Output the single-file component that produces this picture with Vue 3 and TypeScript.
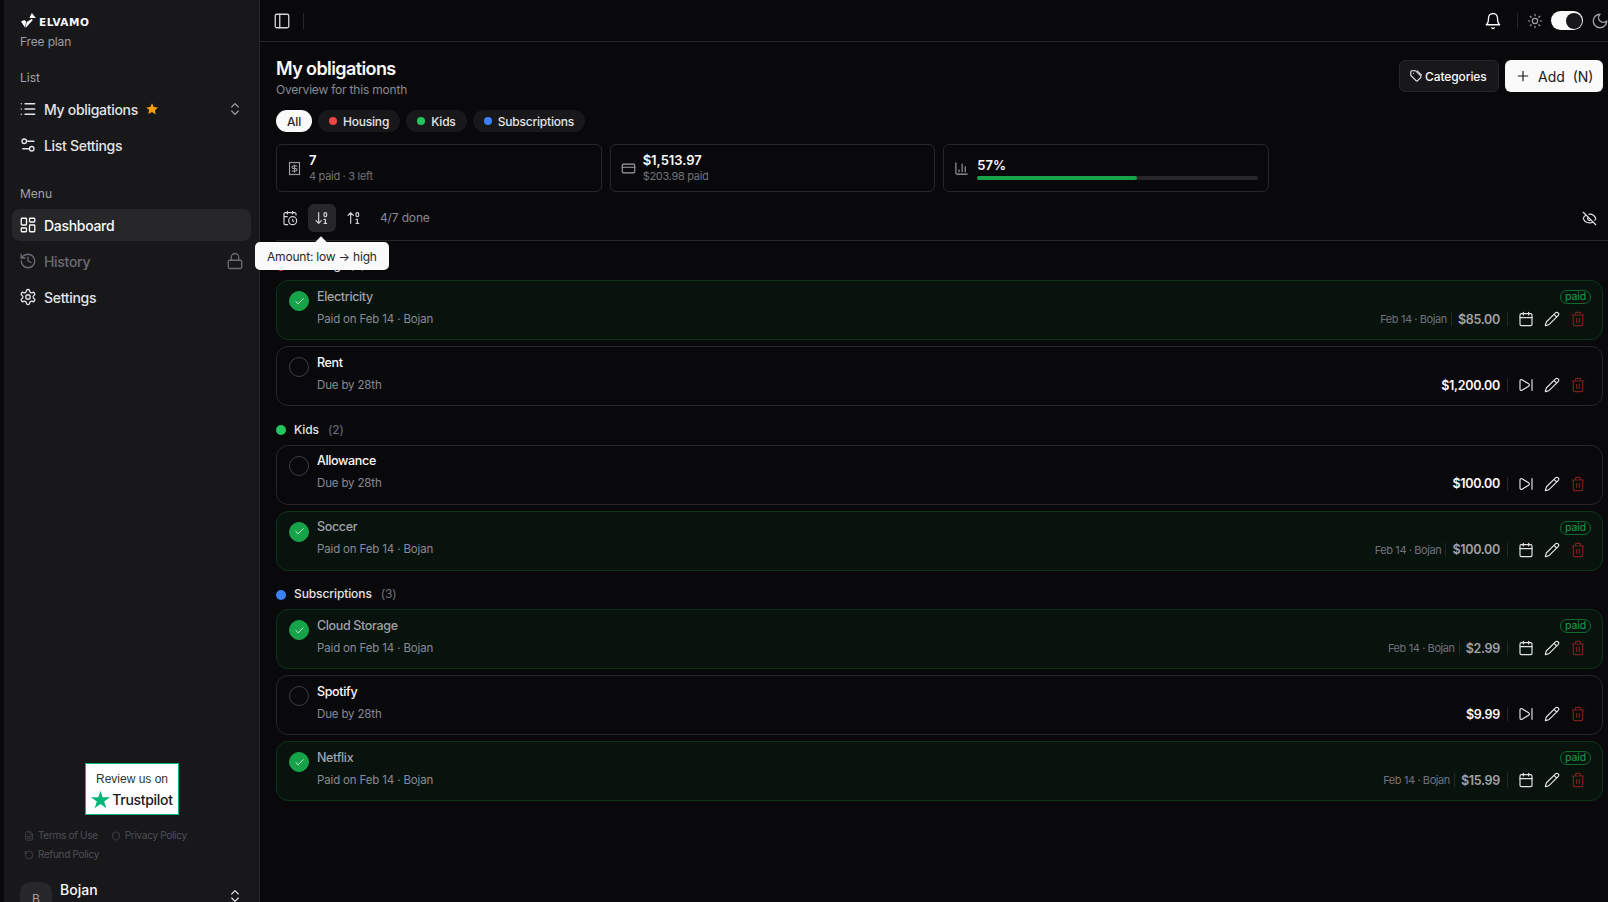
<script setup lang="ts">
import { h } from 'vue'

// lucide-style icon bodies, drawn with stroke=currentColor
const icons: Record<string, string> = {
  list: '<path d="M3 5h.01M3 12h.01M3 19h.01M8 5h13M8 12h13M8 19h13"/>',
  updown: '<path d="m7 15 5 5 5-5M7 9l5-5 5 5"/>',
  sliders: '<path d="M20 7h-9M14 17H5"/><circle cx="17" cy="17" r="3"/><circle cx="7" cy="7" r="3"/>',
  dashboard: '<rect x="3" y="3" width="7" height="9" rx="1"/><rect x="14" y="3" width="7" height="5" rx="1"/><rect x="14" y="12" width="7" height="9" rx="1"/><rect x="3" y="16" width="7" height="5" rx="1"/>',
  history: '<path d="M3 12a9 9 0 1 0 9-9 9.75 9.75 0 0 0-6.74 2.74L3 8"/><path d="M3 3v5h5M12 7v5l4 2"/>',
  lock: '<rect x="3" y="11" width="18" height="11" rx="2"/><path d="M7 11V7a5 5 0 0 1 10 0v4"/>',
  settings: '<path d="M12.22 2h-.44a2 2 0 0 0-2 2v.18a2 2 0 0 1-1 1.73l-.43.25a2 2 0 0 1-2 0l-.15-.08a2 2 0 0 0-2.73.73l-.22.38a2 2 0 0 0 .73 2.73l.15.1a2 2 0 0 1 1 1.72v.51a2 2 0 0 1-1 1.74l-.15.09a2 2 0 0 0-.73 2.73l.22.38a2 2 0 0 0 2.73.73l.15-.08a2 2 0 0 1 2 0l.43.25a2 2 0 0 1 1 1.73V20a2 2 0 0 0 2 2h.44a2 2 0 0 0 2-2v-.18a2 2 0 0 1 1-1.73l.43-.25a2 2 0 0 1 2 0l.15.08a2 2 0 0 0 2.73-.73l.22-.39a2 2 0 0 0-.73-2.73l-.15-.08a2 2 0 0 1-1-1.74v-.5a2 2 0 0 1 1-1.74l.15-.09a2 2 0 0 0 .73-2.73l-.22-.38a2 2 0 0 0-2.73-.73l-.15.08a2 2 0 0 1-2 0l-.43-.25a2 2 0 0 1-1-1.73V4a2 2 0 0 0-2-2z"/><circle cx="12" cy="12" r="3"/>',
  panel: '<rect x="3" y="3" width="18" height="18" rx="2"/><path d="M9 3v18"/>',
  bell: '<path d="M6 8a6 6 0 0 1 12 0c0 7 3 9 3 9H3s3-2 3-9"/><path d="M10.3 21a1.94 1.94 0 0 0 3.4 0"/>',
  sun: '<circle cx="12" cy="12" r="4"/><path d="M12 2v2M12 20v2M4.93 4.93l1.41 1.41M17.66 17.66l1.41 1.41M2 12h2M20 12h2M6.34 17.66l-1.41 1.41M19.07 4.93l-1.41 1.41"/>',
  moon: '<path d="M12 3a6 6 0 0 0 9 9 9 9 0 1 1-9-9Z"/>',
  tags: '<path d="M3 5a2 2 0 0 1 2-2h6l9 9a2 2 0 0 1 0 2.800l-5.200 5.200a2 2 0 0 1-2.800 0L3 11Z"/><path d="M14 3l7.500 7.500"/><path d="M7.500 7.500h.01"/>',
  plus: '<path d="M5 12h14M12 5v14"/>',
  receipt: '<path d="M4 2v20l2-1 2 1 2-1 2 1 2-1 2 1 2-1 2 1V2l-2 1-2-1-2 1-2-1-2 1-2-1-2 1Z"/><path d="M16 8h-6a2 2 0 1 0 0 4h4a2 2 0 1 1 0 4H8M12 17.5v-11"/>',
  card: '<rect x="2" y="5" width="20" height="14" rx="2"/><path d="M2 10h20"/>',
  chart: '<path d="M3 3v16a2 2 0 0 0 2 2h16M18 17V9M13 17V5M8 17v-3"/>',
  calclock: '<path d="M21 7.5V6a2 2 0 0 0-2-2H5a2 2 0 0 0-2 2v14a2 2 0 0 0 2 2h3.5M16 2v4M8 2v4M3 10h5M17.5 17.5 16 16.3V14"/><circle cx="16" cy="16" r="6"/>',
  sortdown: '<path d="m3 16 4 4 4-4M7 20V4"/><rect x="15" y="4" width="4" height="6" ry="2"/><path d="M17 20v-6h-2M15 20h4"/>',
  sortup: '<path d="m3 8 4-4 4 4M7 4v16"/><rect x="15" y="4" width="4" height="6" ry="2"/><path d="M17 20v-6h-2M15 20h4"/>',
  eyeoff: '<path d="M10.733 5.076a10.744 10.744 0 0 1 11.205 6.575 1 1 0 0 1 0 .696 10.747 10.747 0 0 1-1.444 2.49M14.084 14.158a3 3 0 0 1-4.242-4.242M17.479 17.499a10.75 10.75 0 0 1-15.417-5.151 1 1 0 0 1 0-.696 10.75 10.75 0 0 1 4.446-5.143M2 2l20 20"/>',
  calendar: '<path d="M8 2v4M16 2v4"/><rect x="3" y="4" width="18" height="18" rx="2"/><path d="M3 10h18"/>',
  pencil: '<path d="M21.174 6.812a1 1 0 0 0-3.986-3.987L3.842 16.174a2 2 0 0 0-.5.83l-1.321 4.352a.5.5 0 0 0 .623.622l4.353-1.32a2 2 0 0 0 .83-.497zM15 5l4 4"/>',
  trash: '<path d="M3 6h18M19 6v14c0 1-1 2-2 2H7c-1 0-2-1-2-2V6M8 6V4c0-1 1-2 2-2h4c1 0 2 1 2 2v2M10 11v6M14 11v6"/>',
  skip: '<path d="M21 4v16M6.029 4.285A2 2 0 0 0 3 6v12a2 2 0 0 0 3.029 1.715l9.997-5.998a2 2 0 0 0 .003-3.432z"/>',
  file: '<path d="M15 2H6a2 2 0 0 0-2 2v16a2 2 0 0 0 2 2h12a2 2 0 0 0 2-2V7Z"/><path d="M14 2v4a2 2 0 0 0 2 2h4M16 13H8M16 17H8"/>',
  shield: '<path d="M20 13c0 5-3.5 7.5-7.66 8.95a1 1 0 0 1-.67-.01C7.5 20.5 4 18 4 13V6a1 1 0 0 1 1-1c2 0 4.5-1.2 6.24-2.72a1.17 1.17 0 0 1 1.52 0C14.51 3.81 17 5 19 5a1 1 0 0 1 1 1z"/>',
  rotate: '<path d="M3 12a9 9 0 1 0 9-9 9.75 9.75 0 0 0-6.74 2.74L3 8"/><path d="M3 3v5h5"/>',
  check: '<path d="M20 6 9 17l-5-5"/>',
}

const Ico = (props: { name: string; size?: number }) =>
  h('svg', {
    width: props.size ?? 16,
    height: props.size ?? 16,
    viewBox: '0 0 24 24',
    fill: 'none',
    stroke: 'currentColor',
    'stroke-width': 1.75,
    'stroke-linecap': 'round',
    'stroke-linejoin': 'round',
    innerHTML: icons[props.name],
  })
Ico.props = ['name', 'size']

interface Item {
  name: string
  amount: string
  paid: boolean
}

interface Group {
  label: string
  color: string
  items: Item[]
}

const groups: Group[] = [
  {
    label: 'Housing',
    color: '#ef4444',
    items: [
      { name: 'Electricity', amount: '$85.00', paid: true },
      { name: 'Rent', amount: '$1,200.00', paid: false },
    ],
  },
  {
    label: 'Kids',
    color: '#22c55e',
    items: [
      { name: 'Allowance', amount: '$100.00', paid: false },
      { name: 'Soccer', amount: '$100.00', paid: true },
    ],
  },
  {
    label: 'Subscriptions',
    color: '#3b82f6',
    items: [
      { name: 'Cloud Storage', amount: '$2.99', paid: true },
      { name: 'Spotify', amount: '$9.99', paid: false },
      { name: 'Netflix', amount: '$15.99', paid: true },
    ],
  },
]

const progress = 57
</script>

<template>
  <div class="shell">
    <aside class="sidebar">
      <div class="brand">
        <div class="logo">
          <svg width="16" height="15" viewBox="0 0 16 15">
            <path d="M0 8.500 3.200 7l2 1.600L4 14.500z" fill="#fff" />
            <path d="M5.800 9 11 5.800l.6 1.400L5 14.500l-.6-.4z" fill="#fff" />
            <path d="M10.800 0 14.800 5H8.400z" fill="#fff" />
          </svg>
          <span class="logo-text">ELVAMO</span>
        </div>
        <div class="plan">Free plan</div>
      </div>

      <div class="nav-title">List</div>
      <nav class="nav">
        <div class="nav-item">
          <Ico name="list" :size="18" />
          <span>My obligations</span>
          <svg class="star" width="14" height="14" viewBox="0 0 24 24" fill="#f59e0b">
            <path d="M12 2l3.100 6.600 7.100.9-5.200 4.900 1.300 7.100L12 17.100l-6.300 3.400L7 13.400 1.800 9.500l7.100-.9z" />
          </svg>
          <Ico class="nav-end" name="updown" />
        </div>
        <div class="nav-item">
          <Ico name="sliders" :size="18" />
          <span>List Settings</span>
        </div>
      </nav>

      <div class="nav-title menu-title">Menu</div>
      <nav class="nav">
        <div class="nav-item active">
          <Ico name="dashboard" :size="18" />
          <span>Dashboard</span>
        </div>
        <div class="nav-item locked">
          <Ico name="history" :size="18" />
          <span>History</span>
          <Ico class="nav-end" name="lock" :size="18" />
        </div>
        <div class="nav-item">
          <Ico name="settings" :size="18" />
          <span>Settings</span>
        </div>
      </nav>

      <div class="side-foot">
        <div class="trust">
          <div class="trust-top">Review us on</div>
          <div class="trust-brand">
            <svg width="19" height="19" viewBox="0 0 24 24" fill="#00b67a">
              <path d="M12 1l2.800 8.300H24l-7.400 5.300 2.800 8.400L12 17.800 4.600 23l2.800-8.400L0 9.300h9.200z" />
            </svg>
            <span>Trustpilot</span>
          </div>
        </div>
        <div class="legal">
          <span class="legal-link"><Ico name="file" :size="10" />Terms of Use</span>
          <span class="legal-link"><Ico name="shield" :size="10" />Privacy Policy</span>
          <span class="legal-link"><Ico name="rotate" :size="10" />Refund Policy</span>
        </div>
        <div class="user">
          <div class="avatar">B</div>
          <div class="user-name">Bojan</div>
          <Ico class="nav-end" name="updown" />
        </div>
      </div>
    </aside>

    <main class="main">
      <header class="topbar">
        <Ico class="top-icon" name="panel" :size="18" />
        <span class="top-sep"></span>
        <div class="top-right">
          <Ico class="bell" name="bell" :size="18" />
          <span class="top-sep"></span>
          <Ico class="sun" name="sun" />
          <span class="toggle"><i></i></span>
          <Ico class="sun" name="moon" :size="18" />
        </div>
      </header>

      <div class="page">
        <div class="head">
          <div>
            <h1>My obligations</h1>
            <p>Overview for this month</p>
          </div>
          <div class="head-actions">
            <button class="btn-dark"><Ico name="tags" :size="14" />Categories</button>
            <button class="btn-light"><Ico name="plus" />Add&nbsp;&nbsp;(N)</button>
          </div>
        </div>

        <div class="filters">
          <span class="pill on">All</span>
          <span v-for="g in groups" :key="g.label" class="pill">
            <i class="dot" :style="{ background: g.color }"></i>{{ g.label }}
          </span>
        </div>

        <div class="stats">
          <div class="stat">
            <Ico class="stat-icon" name="receipt" :size="15" />
            <div>
              <div class="stat-value">7</div>
              <div class="stat-sub">4 paid · 3 left</div>
            </div>
          </div>
          <div class="stat">
            <Ico class="stat-icon" name="card" :size="15" />
            <div>
              <div class="stat-value">$1,513.97</div>
              <div class="stat-sub">$203.98 paid</div>
            </div>
          </div>
          <div class="stat">
            <Ico class="stat-icon" name="chart" :size="15" />
            <div class="stat-grow">
              <div class="stat-value">{{ progress }}%</div>
              <div class="bar"><div class="bar-fill" :style="{ width: progress + '%' }"></div></div>
            </div>
          </div>
        </div>

        <div class="toolbar">
          <button class="tool"><Ico name="calclock" /></button>
          <button class="tool active">
            <Ico name="sortdown" />
            <span class="tooltip">Amount: low → high</span>
          </button>
          <button class="tool"><Ico name="sortup" /></button>
          <span class="done">4/7 done</span>
          <Ico class="eye" name="eyeoff" :size="15" />
        </div>

        <section v-for="g in groups" :key="g.label" class="group">
          <div class="group-head">
            <i class="group-dot" :style="{ background: g.color }"></i>
            <span class="group-label">{{ g.label }}</span>
            <span class="group-count">({{ g.items.length }})</span>
          </div>
          <div
            v-for="item in g.items"
            :key="item.name"
            class="row"
            :class="{ paid: item.paid }"
          >
            <span class="tick"><Ico v-if="item.paid" name="check" :size="11" /></span>
            <div class="row-text">
              <div class="row-name">{{ item.name }}</div>
              <div class="row-sub">{{ item.paid ? 'Paid on Feb 14 · Bojan' : 'Due by 28th' }}</div>
            </div>
            <div class="row-right">
              <span v-if="item.paid" class="badge">paid</span>
              <div class="row-meta">
                <template v-if="item.paid">
                  <span class="meta-date">Feb 14 · Bojan</span>
                  <span class="meta-sep first"></span>
                </template>
                <span class="amount">{{ item.amount }}</span>
                <span class="meta-sep"></span>
                <span class="act"><Ico :name="item.paid ? 'calendar' : 'skip'" /></span>
                <span class="act"><Ico name="pencil" /></span>
                <span class="act del"><Ico name="trash" /></span>
              </div>
            </div>
          </div>
        </section>
      </div>
    </main>
  </div>
</template>

<style>
html,
body {
  margin: 0;
  background: #09090b;
  overflow: hidden;
}
</style>

<style scoped>
.shell {
  display: flex;
  height: 902px;
  overflow: hidden;
  background: #09090b;
  color: #fafafa;
  font-family: Inter, "Noto Sans", sans-serif;
  font-size: 14px;
}

/* sidebar */
.sidebar {
  flex: none;
  box-sizing: border-box;
  width: 256px;
  height: 930px;
  margin-left: 4px;
  padding: 0 8px;
  display: flex;
  flex-direction: column;
  background: #18181b;
  border-right: 1px solid #27272a;
}

.brand {
  padding: 12px 8px 0 9px;
}

.logo {
  display: flex;
  align-items: center;
  gap: 2px;
  height: 16px;
}

.logo-text {
  font-family: "DejaVu Sans", sans-serif;
  font-size: 10.5px;
  font-weight: 700;
  letter-spacing: 0.5px;
  line-height: 1;
  margin-top: 5px;
}

.plan {
  margin: 5px 0 0 -1px;
  font-size: 12px;
  letter-spacing: -0.15px;
  line-height: 18px;
  color: #9b9ba5;
}

.nav-title {
  margin-top: 17px;
  padding: 0 8px;
  font-size: 12px;
  line-height: 20px;
  color: #a1a1aa;
}

.menu-title {
  margin-top: 23px;
}

.nav {
  display: flex;
  flex-direction: column;
  gap: 4px;
  margin-top: 5px;
}

.nav-item {
  display: flex;
  align-items: center;
  gap: 7px;
  height: 32px;
  padding: 0 8px 0 7px;
  border-radius: 8px;
  font-size: 14px;
  font-weight: 500;
  letter-spacing: -0.3px;
  color: #e4e4e7;
}

.nav-item.active {
  background: #27272a;
  color: #fafafa;
}

.nav-item.locked {
  color: #6b6b73;
}

.nav-end {
  margin-left: auto;
  color: #a1a1aa;
}

.nav-item.locked .nav-end {
  margin-right: -1px;
  color: #6b6b73;
}

.star {
  margin-left: 0;
}

.side-foot {
  margin-top: auto;
}

.trust {
  box-sizing: border-box;
  width: 94px;
  height: 52px;
  margin: 0 auto 0 73px;
  padding-top: 9px;
  background: #fff;
  border: 1.5px solid #00b67a;
  color: #191919;
  font-family: "Liberation Sans", Arial, sans-serif;
  text-align: center;
}

.trust-top {
  font-size: 12px;
  line-height: 15px;
  margin-top: -1px;
  color: #333;
}

.trust-brand {
  display: flex;
  align-items: center;
  justify-content: center;
  gap: 2px;
  margin-top: 3px;
  font-family: Inter, sans-serif;
  font-size: 14px;
  font-weight: 500;
  letter-spacing: -0.3px;
  line-height: 19px;
}

.legal {
  display: flex;
  flex-wrap: wrap;
  gap: 0 13px;
  width: 190px;
  margin: 11px 0 0 12px;
  font-size: 10px;
  letter-spacing: -0.3px;
  line-height: 19px;
  color: #4f4f57;
}

.legal-link {
  display: inline-flex;
  align-items: center;
  gap: 4px;
}

.user {
  display: flex;
  align-items: flex-start;
  gap: 8px;
  margin-top: 18px;
  padding: 0 8px;
  height: 48px;
}

.avatar {
  flex: none;
  width: 32px;
  height: 32px;
  display: flex;
  align-items: center;
  justify-content: center;
  border-radius: 10px;
  background: #27272a;
  color: #a1a1aa;
  font-size: 12px;
}

.user-name {
  font-size: 14px;
  font-weight: 500;
  line-height: 16px;
}

.user .nav-end {
  margin-top: 6px;
  color: #e4e4e7;
}

/* main */
.main {
  flex: 1;
  min-width: 0;
}

.topbar {
  display: flex;
  align-items: center;
  gap: 12px;
  box-sizing: border-box;
  height: 42px;
  padding-left: 13px;
  border-bottom: 1px solid #27272a;
}

.top-icon {
  color: #d4d4d8;
}

.top-sep {
  width: 1px;
  height: 16px;
  background: #27272a;
}

.top-right {
  margin-left: auto;
  display: flex;
  align-items: center;
  gap: 8px;
  margin-right: -1px;
}

.bell {
  color: #fafafa;
  margin-right: 7px;
}

.sun {
  color: #a1a1aa;
}

.top-right .top-sep {
  margin-right: 1px;
}

.toggle {
  display: flex;
  justify-content: flex-end;
  align-items: center;
  box-sizing: border-box;
  width: 32px;
  height: 19px;
  padding: 1.5px;
  border-radius: 10px;
  background: #fafafa;
}

.toggle i {
  width: 16px;
  height: 16px;
  border-radius: 50%;
  background: #18181b;
}

.page {
  padding: 0 5px 0 16px;
}

.head {
  display: flex;
  justify-content: space-between;
  padding-top: 15px;
}

h1 {
  margin: 0;
  font-size: 18px;
  font-weight: 600;
  letter-spacing: -0.6px;
  line-height: 24px;
}

.head p {
  margin: 0;
  font-size: 12px;
  letter-spacing: -0.2px;
  line-height: 18px;
  color: #8a8a94;
}

.head-actions {
  display: flex;
  gap: 6px;
  margin-top: 3px;
}

button {
  font-family: inherit;
}

.btn-dark,
.btn-light {
  display: flex;
  align-items: center;
  box-sizing: border-box;
  height: 32px;
  border-radius: 6px;
  font-weight: 500;
}

.btn-dark {
  gap: 2px;
  width: 100px;
  padding: 0 0 0 9px;
  background: #18181b;
  border: 1px solid #27272a;
  color: #fafafa;
  font-size: 12px;
  letter-spacing: -0.1px;
}

.btn-light {
  gap: 7px;
  width: 98px;
  padding: 0 0 0 10px;
  background: #fafafa;
  border: 0;
  color: #18181b;
  font-size: 14px;
  font-weight: 400;
}

.filters {
  display: flex;
  gap: 6px;
  margin-top: 11px;
}

.pill {
  display: flex;
  align-items: center;
  gap: 6px;
  height: 22px;
  padding: 0 11px;
  border-radius: 11px;
  background: #18181b;
  color: #e4e4e7;
  font-size: 12px;
  font-weight: 500;
  letter-spacing: -0.2px;
}

.pill.on {
  background: #fafafa;
  color: #27272a;
}

.dot {
  width: 8px;
  height: 8px;
  border-radius: 50%;
}

.stats {
  display: grid;
  grid-template-columns: repeat(3, 1fr);
  gap: 8px;
  max-width: 993px;
  margin-top: 12px;
}

.stat {
  display: flex;
  align-items: center;
  gap: 7px;
  box-sizing: border-box;
  height: 48px;
  padding: 0 10px;
  border: 1px solid #27272a;
  border-radius: 6px;
}

.stat-icon {
  flex: none;
  color: #a1a1aa;
}

.stat-grow {
  flex: 1;
  margin-left: 1px;
}

.stat-value {
  font-size: 13px;
  font-weight: 600;
  line-height: 17px;
}

.stat-sub {
  font-size: 11px;
  letter-spacing: -0.3px;
  line-height: 15px;
  color: #71717a;
}

.bar {
  height: 4px;
  margin-top: 2px;
  border-radius: 2px;
  background: #27272a;
}

.bar-fill {
  height: 100%;
  border-radius: 2px;
  background: #16a34a;
}

.toolbar {
  display: flex;
  align-items: center;
  gap: 4px;
  box-sizing: border-box;
  height: 37px;
  margin: 12px -5px 0 0;
  padding: 0 4px 8px 0;
  border-bottom: 1px solid #27272a;
}

.tool {
  position: relative;
  display: flex;
  align-items: center;
  justify-content: center;
  width: 28px;
  height: 28px;
  padding: 0;
  background: none;
  border: 0;
  border-radius: 6px;
  color: #d4d4d8;
}

.tool.active {
  background: #27272a;
}

.tooltip {
  position: absolute;
  left: -53px;
  top: 38px;
  padding: 0 12px;
  height: 28px;
  display: flex;
  align-items: center;
  white-space: nowrap;
  border-radius: 5px;
  background: #fafafa;
  color: #27272a;
  font-size: 12px;
  font-weight: 400;
  letter-spacing: -0.2px;
  z-index: 2;
}

.tooltip::before {
  content: "";
  position: absolute;
  left: 62px;
  top: -4px;
  width: 8px;
  height: 8px;
  background: #fafafa;
  transform: rotate(45deg);
}

.done {
  margin: 0 0 1px 8px;
  font-size: 12px;
  letter-spacing: -0.15px;
  color: #8a8a94;
}

.eye {
  margin-left: auto;
  margin-right: 7px;
  color: #e4e4e7;
}

.group-head {
  display: flex;
  align-items: center;
  height: 16.5px;
  margin: 16px 0 6px;
  font-size: 12px;
  font-weight: 500;
  letter-spacing: -0.1px;
  line-height: 14px;
}

.group-dot {
  width: 10px;
  height: 10px;
  border-radius: 50%;
  margin-right: 8px;
}

.group-label {
  color: #e4e4e7;
  margin-bottom: 1px;
}

.group-count {
  margin: 0 0 1px 9px;
  color: #71717a;
  font-weight: 400;
}

.group:first-of-type .group-head {
  margin-top: 16.5px;
}

.row {
  display: flex;
  box-sizing: border-box;
  height: 60px;
  margin-bottom: 6px;
  padding: 0 11px 0 12px;
  border: 1px solid #27272a;
  border-radius: 12px;
}

.row.paid {
  background: #09130e;
  border-color: #0d3319;
}

.tick {
  flex: none;
  display: flex;
  align-items: center;
  justify-content: center;
  box-sizing: border-box;
  width: 20px;
  height: 20px;
  margin-top: 10px;
  border: 1px solid #3f3f46;
  border-radius: 50%;
  color: #fff;
}

.paid .tick {
  background: #16a34a;
  border-color: #16a34a;
}

.row-text {
  margin-left: 8px;
  padding-top: 7.5px;
}

.row-name {
  font-size: 12.5px;
  font-weight: 500;
  letter-spacing: -0.35px;
  line-height: 16px;
  color: #fafafa;
}

.paid .row-name {
  color: #a1a1aa;
}

.row-sub {
  margin-top: 6px;
  font-size: 11.5px;
  letter-spacing: -0.15px;
  line-height: 16px;
  color: #8a8a94;
}

.row-right {
  margin-left: auto;
  display: flex;
  flex-direction: column;
  align-items: flex-end;
  justify-content: flex-end;
  padding-bottom: 7px;
}

.badge {
  box-sizing: border-box;
  margin-bottom: 2px;
  padding: 0 4px;
  height: 14px;
  line-height: 12px;
  font-size: 10.5px;
  letter-spacing: -0.1px;
  border: 1px solid #0f6b2e;
  border-radius: 7px;
  color: #16a34a;
}

.row-meta {
  display: flex;
  align-items: center;
  height: 26px;
}

.meta-date {
  font-size: 11px;
  letter-spacing: -0.4px;
  color: #71717a;
}

.meta-sep {
  width: 1px;
  height: 14px;
  margin: 0 5px 0 7px;
  background: #27272a;
}

.meta-sep.first {
  margin: 0 6px 0 4px;
}

.amount {
  font-size: 12.5px;
  font-weight: 600;
  letter-spacing: -0.3px;
  color: #fafafa;
}

.paid .amount {
  color: #a1a1aa;
}

.act {
  display: flex;
  align-items: center;
  justify-content: center;
  width: 26px;
  height: 26px;
  color: #e4e4e7;
}

.act.del {
  color: #7f1d1d;
}
</style>
